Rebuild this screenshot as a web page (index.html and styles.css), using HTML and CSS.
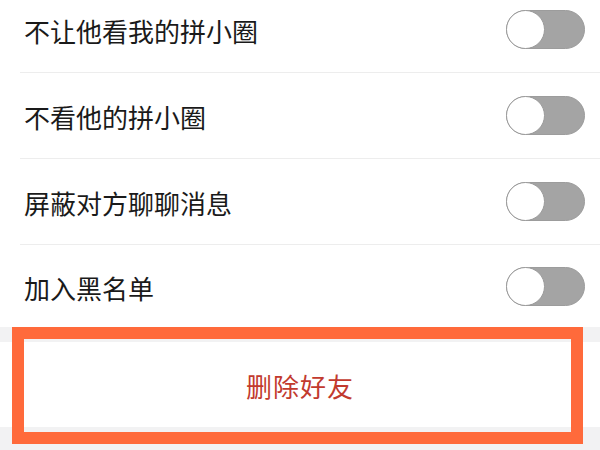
FILE: index.html
```
<!DOCTYPE html>
<html lang="zh-CN">
<head>
    <meta charset="UTF-8">
    <meta name="viewport" content="width=device-width, initial-scale=1.0">
    <title>好友设置</title>
    <link rel="stylesheet" href="styles.css">
</head>
<body>
<div class="page">
    <div class="settings">
        <div class="setting-row">
            <span class="setting-label">不让他看我的拼小圈</span>
            <span class="switch"><span class="knob"></span></span>
        </div>
        <div class="setting-row">
            <span class="setting-label">不看他的拼小圈</span>
            <span class="switch"><span class="knob"></span></span>
        </div>
        <div class="setting-row">
            <span class="setting-label">屏蔽对方聊聊消息</span>
            <span class="switch"><span class="knob"></span></span>
        </div>
        <div class="setting-row">
            <span class="setting-label">加入黑名单</span>
            <span class="switch"><span class="knob"></span></span>
        </div>
    </div>
    <div class="delete-row">
        <span class="delete-text">删除好友</span>
        <div class="highlight"></div>
    </div>
</div>
</body>
</html>
```

FILE: styles.css
```
body {
    margin: 0;
    font-family: "Noto Sans CJK SC", "Noto Sans", sans-serif;
    background: #f2f2f3;
    color: #1a1a1a;
    overflow: hidden;
}

.page {
    height: 450px;
    overflow: hidden;
}

.settings {
    background: #fff;
    margin-top: -13px;
}

.setting-row {
    display: flex;
    align-items: center;
    justify-content: space-between;
    height: 85px;
    margin-left: 20px;
    padding: 0 15px 0 4px;
    border-bottom: 1px solid #ededed;
}

.setting-row:last-child {
    border-bottom: none;
    height: 82px;
}

.setting-label {
    font-size: 26px;
    line-height: 1;
    margin-top: 3px;
}

.switch {
    display: block;
    width: 79px;
    height: 39px;
    box-sizing: border-box;
    border-radius: 20px;
    background: #a4a4a4;
    border: 1px solid #9c9c9c;
    position: relative;
}

.knob {
    position: absolute;
    left: -1px;
    top: -1px;
    width: 39px;
    height: 39px;
    box-sizing: border-box;
    border-radius: 50%;
    background: #fff;
    border: 1.5px solid #9a9a9a;
}

.delete-row {
    position: relative;
    margin-top: 15px;
    height: 85px;
    background: #fff;
    display: flex;
    align-items: center;
    justify-content: center;
}

.delete-text {
    font-size: 26px;
    color: #c23a2e;
    letter-spacing: 1px;
    margin-top: 2px;
}

.highlight {
    position: absolute;
    left: 12px;
    top: -15px;
    width: 571px;
    height: 117px;
    box-sizing: border-box;
    border: 12px solid #ff6a3b;
}
```
